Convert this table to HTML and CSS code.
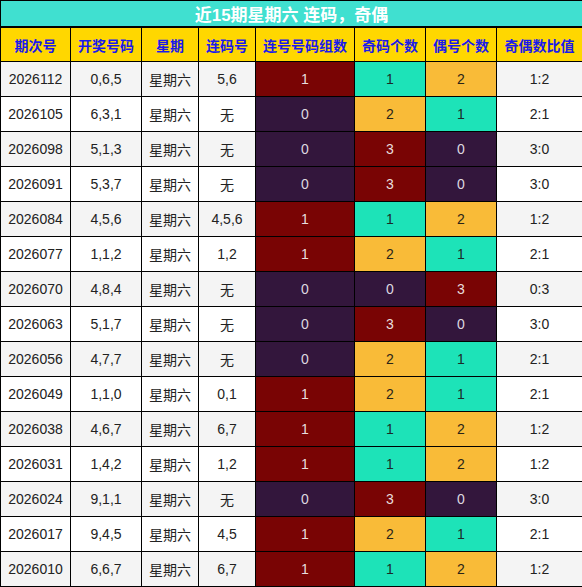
FILE: index.html
```html
<!DOCTYPE html>
<html lang="zh-CN">
<head>
  <meta charset="UTF-8" />
  <title>近15期星期六 连码，奇偶</title>
  <link rel="stylesheet" href="styles.css">
</head>
<body>
  <table class="stats">
    <colgroup>
      <col style="width:70px"><col style="width:71px"><col style="width:57px"><col style="width:57px">
      <col style="width:99px"><col style="width:71px"><col style="width:71px"><col style="width:86px">
    </colgroup>
    <tr class="title-row"><th colspan="8">近15期星期六 连码，奇偶</th></tr>
    <tr class="head-row">
      <th>期次号</th><th>开奖号码</th><th>星期</th><th>连码号</th>
      <th>连号号码组数</th><th>奇码个数</th><th>偶号个数</th><th>奇偶数比值</th>
    </tr>
    <tr><td>2026112</td><td>0,6,5</td><td>星期六</td><td>5,6</td><td class="red">1</td><td class="teal">1</td><td class="org">2</td><td>1:2</td></tr>
    <tr><td>2026105</td><td>6,3,1</td><td>星期六</td><td>无</td><td class="pur">0</td><td class="org">2</td><td class="teal">1</td><td>2:1</td></tr>
    <tr><td>2026098</td><td>5,1,3</td><td>星期六</td><td>无</td><td class="pur">0</td><td class="red">3</td><td class="pur">0</td><td>3:0</td></tr>
    <tr><td>2026091</td><td>5,3,7</td><td>星期六</td><td>无</td><td class="pur">0</td><td class="red">3</td><td class="pur">0</td><td>3:0</td></tr>
    <tr><td>2026084</td><td>4,5,6</td><td>星期六</td><td>4,5,6</td><td class="red">1</td><td class="teal">1</td><td class="org">2</td><td>1:2</td></tr>
    <tr><td>2026077</td><td>1,1,2</td><td>星期六</td><td>1,2</td><td class="red">1</td><td class="org">2</td><td class="teal">1</td><td>2:1</td></tr>
    <tr><td>2026070</td><td>4,8,4</td><td>星期六</td><td>无</td><td class="pur">0</td><td class="pur">0</td><td class="red">3</td><td>0:3</td></tr>
    <tr><td>2026063</td><td>5,1,7</td><td>星期六</td><td>无</td><td class="pur">0</td><td class="red">3</td><td class="pur">0</td><td>3:0</td></tr>
    <tr><td>2026056</td><td>4,7,7</td><td>星期六</td><td>无</td><td class="pur">0</td><td class="org">2</td><td class="teal">1</td><td>2:1</td></tr>
    <tr><td>2026049</td><td>1,1,0</td><td>星期六</td><td>0,1</td><td class="red">1</td><td class="org">2</td><td class="teal">1</td><td>2:1</td></tr>
    <tr><td>2026038</td><td>4,6,7</td><td>星期六</td><td>6,7</td><td class="red">1</td><td class="teal">1</td><td class="org">2</td><td>1:2</td></tr>
    <tr><td>2026031</td><td>1,4,2</td><td>星期六</td><td>1,2</td><td class="red">1</td><td class="teal">1</td><td class="org">2</td><td>1:2</td></tr>
    <tr><td>2026024</td><td>9,1,1</td><td>星期六</td><td>无</td><td class="pur">0</td><td class="red">3</td><td class="pur">0</td><td>3:0</td></tr>
    <tr><td>2026017</td><td>9,4,5</td><td>星期六</td><td>4,5</td><td class="red">1</td><td class="org">2</td><td class="teal">1</td><td>2:1</td></tr>
    <tr><td>2026010</td><td>6,6,7</td><td>星期六</td><td>6,7</td><td class="red">1</td><td class="teal">1</td><td class="org">2</td><td>1:2</td></tr>
  </table>
</body>
</html>
```

FILE: styles.css
```css
body {
  margin: 0;
  background-color: #fff;
  font-family: "Liberation Sans", Arial, "Noto Sans CJK SC", sans-serif;
}

.stats {
  width: 582px;
  border-collapse: collapse;
  table-layout: fixed;
  font-size: 14px;
  color: #222;
}

.stats th,
.stats td {
  border: 1px solid #000;
  padding: 0;
  text-align: center;
}

.title-row th {
  height: 24px;
  background-color: #40e0d0;
  color: #fff;
  font-size: 17px;
  font-weight: bold;
  border-bottom-width: 2px;
}

.head-row th {
  height: 33px;
  background-color: #ffd700;
  color: #1a1aeb;
  font-size: 14px;
  font-weight: bold;
}

.stats td {
  height: 34px;
  background-color: #f4f4f4;
}

.stats tr:nth-child(even) td {
  background-color: #fff;
}

.stats tr td.red {
  background-color: #790404;
  color: #e8dede;
}

.stats tr td.pur {
  background-color: #33163c;
  color: #ddd8e0;
}

.stats tr td.teal {
  background-color: #1de3b8;
  color: #1c2b26;
}

.stats tr td.org {
  background-color: #f9bb38;
  color: #2a2418;
}
```
